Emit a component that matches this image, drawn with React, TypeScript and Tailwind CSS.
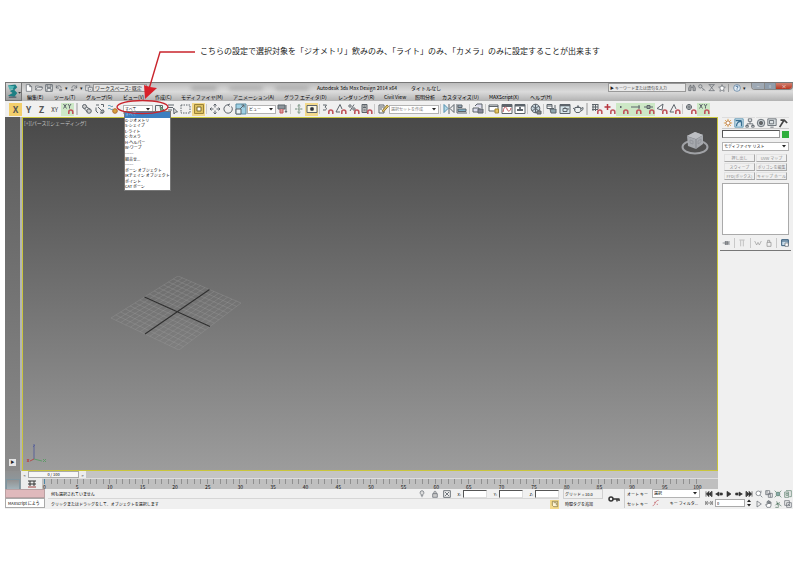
import type { ReactNode } from 'react';

const INK = '#5d646b';
const BLUE = '#4f8fae';
const RED = '#c0545c';

const magnet = (
  <path d="M6.8 11V9a2 2 0 0 1 4 0v2" stroke={RED} strokeWidth="1.6" />
);

const drawings: Record<string, ReactNode> = {
  xyMagnet: (
    <>
      <path d="M1.5 1l3 4.500M4.500 1l-3 4.500M6 1l1.500 2.200L9 1M7.500 3.200v2.300" />
      {magnet}
    </>
  ),
  link: (
    <>
      <circle cx="3.500" cy="3.500" r="2" fill="#ccc" />
      <circle cx="8" cy="8" r="2.300" fill="#ccc" />
      <path d="M3 5.500l3.500 3.500M5.500 3.500L9 6.500" />
    </>
  ),
  unlink: (
    <>
      <path d="M2 2h3M7 1.500h2.500V4M2 4.500V8l2 2M6 10h3V6.500M4 4l4 4" />
      <circle cx="8.500" cy="8.500" r="1.500" />
    </>
  ),
  bind: (
    <>
      <path d="M1 3c2-2 3 2 5 0M1 6c2-2 3 2 5 0" stroke={BLUE} />
      <circle cx="8" cy="8" r="2.300" fill="#d9a23c" stroke="#b06a30" />
    </>
  ),
  select: (
    <>
      <path d="M1.500 2.500h7v7h-7z" />
      <path d="M6 3l4 4-2 .3L7 9z" fill="#7ea58a" stroke="#5c8068" />
    </>
  ),
  list: (
    <>
      <path d="M1 2h6M1 4.500h5M1 7h4" />
      <path d="M6.500 5l4 4H8.500l-1.500 2z" fill="#eee" />
    </>
  ),
  rect: <path d="M1 2h9v8H1z" strokeDasharray="1.500 1" />,
  crossing: (
    <>
      <path d="M1.500 1.500h9v9h-9z" fill="#dcc060" stroke="#9a8238" />
      <path d="M4 4h4v4H4z" fill="#fff" stroke="#7a6a30" />
    </>
  ),
  move: (
    <path d="M6 1v3.500M6 7.500V11M1 6h3.500M7.500 6H11M4.500 2.500L6 1l1.500 1.500M4.500 9.500L6 11l1.500-1.500M2.500 4.500L1 6l1.500 1.500M9.500 4.500L11 6 9.500 7.500" />
  ),
  rotate: <path d="M9.500 3.500A4.200 4.200 0 1 1 6 1.800l2-.8M6 1.800l1.500 1.700" />,
  scale: (
    <>
      <path d="M1 1h10v10H1z" fill="#9fd0e4" stroke="#5a8ca0" />
      <path d="M1 6h5v5H1z" fill="#eaf4f8" />
      <path d="M5 6l4-4M6.500 2H9v2.500" />
    </>
  ),
  pivot: (
    <>
      <path d="M1 2h7v4H1z" fill="#8d969c" />
      <path d="M3 6v4h3V6" stroke={RED} fill="#dc9a9a" />
      <path d="M9 2v7M8 8l1 1.500L10 8" />
    </>
  ),
  manipulate: (
    <path d="M6 1v10M2 6h8M4.500 3h3M4.500 9h3" stroke="#6f8a78" strokeDasharray="2 .6" />
  ),
  keyboard: (
    <>
      <path d="M1 2.500h10v7H1z" fill="#fdf6df" />
      <circle cx="6" cy="6" r="1.700" fill="#333" />
    </>
  ),
  snap3: (
    <>
      <path d="M1 2h3.500L3 4.200c2 .2 2 3.300-.8 2.800H1" />
      {magnet}
    </>
  ),
  snapAngle: (
    <>
      <path d="M1 9L5 1.500 7 6M1 9h4" />
      {magnet}
    </>
  ),
  snapPercent: (
    <>
      <circle cx="2" cy="3" r="1.200" />
      <circle cx="6" cy="6" r="1.200" />
      <path d="M6 1.500L2 8" />
      {magnet}
    </>
  ),
  snapSpinner: (
    <>
      <path d="M1 1.500h5v8H1zM2 4.500h3M2.500 3h2M2.500 7h2" fill="#bbb" />
      {magnet}
    </>
  ),
  edit: (
    <>
      <path d="M2 2h5v8H2zM3 4h3M3 6h2" />
      <path d="M5 8l5-6 1.500 1.300-5 5.500z" fill="#e2c66c" stroke="#957d3a" />
    </>
  ),
  mirror: (
    <>
      <path d="M1 1.500v8l4-4z" fill="#b8d9e6" stroke={BLUE} />
      <path d="M11 1.500v8l-4-4zM6 1v10" />
    </>
  ),
  align: (
    <>
      <path d="M1 1v9h10" />
      <path d="M2 2h4v2.500H2z" fill="#9ab" />
      <path d="M2 6h8v2.500H2z" fill="#7fb3cb" />
    </>
  ),
  layers: (
    <>
      <path d="M3 3l2-2h5v4M1 5h6v4H1z" fill="#dde" />
      <path d="M6 6h5v4H6z" fill="#889" />
    </>
  ),
  ribbon: (
    <>
      <path d="M1 2h9v6H1zM1 3.500h9" fill="#fff" />
      <path d="M7 6h3.500v4H7z" fill="#e4c461" stroke="#a58a35" />
    </>
  ),
  curve: (
    <>
      <path d="M1 1.500h10v9H1z" fill="#fff" />
      <path d="M1 3h10" strokeWidth="2" />
      <path d="M2 9c1-6 3-6 4-3s3 3 4-1" stroke={RED} />
    </>
  ),
  schematic: (
    <>
      <path d="M1 1.500h10v9H1z" fill="#fff" />
      <path d="M1 2.500h10M6 4v3M3 7h6" strokeWidth="1.800" />
    </>
  ),
  material: (
    <>
      <circle cx="5.500" cy="5.500" r="4.300" fill="#c5d4dc" />
      <path d="M2 3l7 5M2 8l7-5M5.500 1v9" />
      <path d="M7 8h4v3H7z" fill="#888" />
    </>
  ),
  renderSetup: (
    <>
      <path d="M1 1.500h5v4H1zM1 3h5" fill="#fff" />
      <path d="M4 6h6v4H5zM6 5.500h2" fill="#8fa5ae" />
      <path d="M9 2v3" />
    </>
  ),
  frame: (
    <>
      <path d="M1 1.500h10v9H1z" fill="#d6e4ea" />
      <path d="M1 2.500h10" strokeWidth="1.600" />
      <path d="M4 5.500h4v3H4zM8 6h2M5 5h2" />
    </>
  ),
  teapot: (
    <path d="M3 4.500h5.500l.5 3-1.500 2h-3.500l-1.500-2zM3.500 7L1 5M9 5.500l2-1v2L9 8M5 4l1-1.500L7 4" fill="#edf1f2" />
  ),
  snapGrid: (
    <>
      <path d="M1 1.500h6M1 4h6M1 6.500h6M2 1v7M4.500 1v7M7 1v5" />
      {magnet}
    </>
  ),
  snapPivot: (
    <>
      <path d="M3.500 1v6M.5 4h6" stroke="#b7353f" strokeWidth="1.500" />
      {magnet}
    </>
  ),
  snapVertex: (
    <>
      <path d="M3 4h1.500" strokeWidth="2" />
      {magnet}
    </>
  ),
  snapEdge: (
    <>
      <path d="M1 4h9M9 2v4" />
      {magnet}
    </>
  ),
  snapMid: (
    <>
      <path d="M1 4h9M4 2.500h3v3H4z" />
      {magnet}
    </>
  ),
  snapFace: (
    <>
      <path d="M7 1L1 5.500 6 7z" fill="#fff" />
      {magnet}
    </>
  ),
  snapFrozen: (
    <>
      <circle cx="4" cy="4" r="2.500" />
      <path d="M1 4h6M4 1v6" />
      {magnet}
    </>
  ),
  newFile: <path d="M2 1h5l3 3v7H2zM7 1v3h3" fill="#fff" />,
  open: <path d="M1 9V3h4l1 1h4v1.500M1 9l2.500-4H12L9.500 9z" fill="#e8e8e8" />,
  save: <path d="M1 1h10v10H1zM3 1v4h6V1M3 11V7h6v4" fill="#fff" strokeWidth="1.300" />,
  undo: <path d="M2 6c1-5 8-4 7 0M2 2v4h4M7 8h3v2H7z" />,
  redo: <path d="M10 6C9 1 2 2 3 6M10 2v4H6M2 8h3v2H2z" />,
  project: <path d="M1 2h6v3M1 2v8h3M5 5h6v6H5zM7 8h2" fill="#eee" />,
  binoculars: (
    <path d="M2 4l1-2h1.500v8H1V6zM10 4L9 2H7.500v8H11V6zM4.500 5h3" fill="#aaa" />
  ),
  key: (
    <>
      <circle cx="3.500" cy="3.500" r="2.500" />
      <path d="M5.500 5.500L11 10M8 8l-1 2" />
    </>
  ),
  exchange: <path d="M2 1l7 9M9 1L2 10M1 1h9M1 10h9" />,
  star: <path d="M6 1l1.500 3.500 3.500.3-2.700 2.400.8 3.800L6 9l-3.100 2 .8-3.800L1 4.800l3.500-.3z" fill="#fff" />,
  help: (
    <>
      <circle cx="6" cy="6" r="5" fill="#e4edf5" stroke="#4b7397" />
      <path d="M4.500 4.500c0-2 3-2 3 0C7.500 6 6 5.500 6 7M6 8.200v1" stroke="#2e5a85" strokeWidth="1.300" />
    </>
  ),
  create: (
    <>
      <path d="M6 1v10M1 6h10M2.500 2.500l7 7M9.500 2.500l-7 7" stroke="#e09a3d" />
      <circle cx="6" cy="6" r="2.500" fill="#fff" stroke="#b5733a" />
    </>
  ),
  modify: (
    <>
      <path d="M1 1h10v10H1z" fill="#cfe3ee" stroke={BLUE} />
      <path d="M2 3h7M3 10c0-4 2-6 6-6M9 4v6" stroke="#386f91" strokeWidth="1.500" />
    </>
  ),
  hierarchy: <path d="M4 1h4v3H4zM6 4v3M2.500 10V7h7v3M1 9h3v2H1zM8 9h3v2H8z" />,
  motion: (
    <>
      <circle cx="6" cy="6" r="4.500" fill="#c8cdd0" />
      <circle cx="6" cy="6" r="2" fill="#666" />
    </>
  ),
  display: <path d="M1 1h10v8H1zM3 3h5v4H3zM4 11h4" fill="#dde2e4" />,
  utilities: <path d="M3 2.500h4.500L11 6M7 3L2 11" stroke="#444" strokeWidth="2" />,
  pin: <path d="M1 6h4M5 3v6M5 4h4v4H5M10.500 3v6" fill="#999" />,
  endResult: <path d="M2 1.500h8M4 2v9M8 2v9" stroke="#aaa" />,
  unique: <path d="M1 3l3 6 2-4 2 4 3-6" stroke="#999" />,
  trash: <path d="M3 5h6v6H3zM4 5V2h3v3" stroke="#888" />,
  configure: (
    <>
      <path d="M1 1h10v9H1zM1 3h10" fill="#c8dcea" stroke="#385d7b" strokeWidth="1.500" />
      <path d="M6 6h5v5H6z" fill="#fff" />
    </>
  ),
  bulb: <path d="M6 1a3 3 0 0 1 1.500 5.500V8h-3V6.500A3 3 0 0 1 6 1M5 10h2" fill="#ddd" />,
  lock: <path d="M2.500 5.500h7V11h-7zM4 5.500c0-5 4-5 4 0" fill="#ccc" />,
  transform: <path d="M1 1h10v10H1zM3 3l6 6M9 3L3 9" strokeWidth="1.300" />,
  bigKey: (
    <>
      <circle cx="3" cy="6" r="2" stroke="#333" strokeWidth="1.500" />
      <path d="M5 6h6.500M9 6v2.500M11 6v2" stroke="#333" strokeWidth="1.500" />
    </>
  ),
  tag: <path d="M2 2h8v8H4L2 8zM4 4h4v4" fill="#fff6d8" stroke="#7a6a30" />,
  tangent: <path d="M1 10C5 10 4 2 10 2M3 5h2M7 8h2" stroke={RED} />,
  first: <path d="M1.500 2v8M10.500 2v8M6 2v8L2 6zM10 2v8L6 6z" fill="#333" stroke="#333" />,
  prev: <path d="M6 3v6L1 6zM7.500 4.500h3.500v3H7.500z" fill="#333" stroke="#333" />,
  play: <path d="M3 2v8l6-4z" fill="#333" stroke="#333" />,
  next: <path d="M6 3v6l5-3zM1 4.500h3.500v3H1z" fill="#333" stroke="#333" />,
  last: <path d="M1.500 2v8M10.500 2v8M2 2v8l4-4zM6 2v8l4-4z" fill="#333" stroke="#333" />,
  keyMode: <path d="M1 3v6M4 3L2 6l2 3M8 3l2 3-2 3M11 3v6M3 6h6" stroke="#555" />,
  zoom: (
    <>
      <circle cx="5" cy="5" r="3.500" fill="#fff" />
      <path d="M8 8l3 3M9 1v3" />
    </>
  ),
  zoomAll: <path d="M1 1h6v6H1zM5 5h6v6H5zM3 1v6M8 5v6" />,
  extents: <path d="M3.500 3.500h5v5h-5zM1 1l2 2M11 1L9 3M1 11l2-2M11 11L9 9" fill="#8aa" stroke="#557a66" />,
  extentsAll: <path d="M1 3h6v8H1zM3 1h8v9H8M3 5h3v3H3z" stroke="#557a66" />,
  fov: <path d="M3 1.500v9L9.500 6z" fill="#eee" />,
  pan: <path d="M3 11L1 7l2 .5V2.500h1.500V6 1H6v5-4h1.500v4-3H9v5l-1 3z" fill="#fff" />,
  orbit: <path d="M4 2l3 8M2 8c3-5 7 0 9 1M4 6l5-2M2 11h5" stroke="#446a55" />,
  maximize: <path d="M1 1h7v7H1zM4 4h7v7H4zM6 6l3 3" />,
};

const iconSizes = {
  sm: 'size-[8px] shrink-0',
  md: 'size-[10px] shrink-0',
  lg: 'size-[12px] shrink-0',
};

type IconProps = { name: string; size?: keyof typeof iconSizes };

function Icon({ name, size = 'lg' }: IconProps) {
  return (
    <svg
      viewBox="0 0 12 12"
      className={iconSizes[size]}
      fill="none"
      stroke={INK}
      strokeWidth="1"
      aria-hidden="true"
    >
      {drawings[name]}
    </svg>
  );
}

function Tool({ name, tone = '' }: { name: string; tone?: string }) {
  return (
    <button
      aria-label={name}
      className={`flex h-[13px] w-[13px] shrink-0 items-center justify-center ${tone}`}
    >
      <Icon name={name} />
    </button>
  );
}

function Tools({ names }: { names: string[] }) {
  return names.map((name) => <Tool key={name} name={name} />);
}

function Divider() {
  return <span className="mx-px h-[10px] w-px shrink-0 bg-[#c9c9c9]" />;
}

function Handle() {
  return (
    <span className="mx-[2px] h-[12px] w-[2px] shrink-0 border-x border-[#c4c4c4]" />
  );
}

type DropProps = { label: string; options: string[]; width: string };

function Drop({ label, options, width }: DropProps) {
  return (
    <span className={`relative flex h-[9px] shrink-0 items-center border border-[#b3b3b3] bg-white ${width}`}>
      <select
        aria-label={label}
        className="h-full w-full appearance-none pl-px text-[4px] leading-[7px] outline-none"
      >
        {options.map((option) => (
          <option key={option}>{option}</option>
        ))}
      </select>
      <svg viewBox="0 0 4 3" className="pointer-events-none absolute right-[2px] h-[3px] w-[4px]" aria-hidden="true">
        <path d="M0 0h4L2 2.500z" fill="#222" />
      </svg>
    </span>
  );
}

const menus = [
  { label: '編集(E)', width: 'w-[27px]' },
  { label: 'ツール(T)', width: 'w-[32px]' },
  { label: 'グループ(G)', width: 'w-[37px]' },
  { label: 'ビュー(V)', width: 'w-[32px]' },
  { label: '作成(C)', width: 'w-[26px]' },
  { label: 'モディファイヤ(M)', width: 'w-[52px]' },
  { label: 'アニメーション(A)', width: 'w-[51px]' },
  { label: 'グラフ エディタ(D)', width: 'w-[54px]' },
  { label: 'レンダリング(R)', width: 'w-[46px]' },
  { label: 'Civil View', width: 'w-[31px]' },
  { label: '照明分析', width: 'w-[27px]' },
  { label: 'カスタマイズ(U)', width: 'w-[47px]' },
  { label: 'MAXScript(X)', width: 'w-[41px]' },
  { label: 'ヘルプ(H)', width: 'w-[26px]' },
];

const filters = [
  'すべて',
  'G-ジオメトリ',
  'S-シェイプ',
  'L-ライト',
  'C-カメラ',
  'H-ヘルパー',
  'W-ワープ',
  '------',
  '組合せ...',
  '------',
  'ボーン オブジェクト',
  'IKチェイン オブジェクト',
  'ポイント',
  'CAT ボーン',
];

const modifiers = ['押し出し', 'UVW マップ', 'スウィープ', 'ポリゴンを編集', 'FFD(ボックス)', 'キャップ ホール'];

const tabs = ['create', 'modify', 'hierarchy', 'motion', 'display', 'utilities'];

function TitleBar() {
  return (
    <div className="flex h-[10px] items-center border-t border-[#777] bg-linear-to-b from-[#bcbcbc] to-[#dcdcdc]">
      <div className="flex items-center gap-[2px] pl-[3px]">
        <Icon name="newFile" size="sm" />
        <Icon name="open" size="sm" />
        <Icon name="save" size="sm" />
        <Icon name="undo" size="sm" />
        <span className="text-[5px] leading-[8px]">▾</span>
        <Icon name="redo" size="sm" />
        <span className="text-[5px] leading-[8px]">▾</span>
        <Icon name="project" size="sm" />
      </div>
      <button className="h-[8px] w-[54px] overflow-hidden border border-[#999] bg-[#e4e4e4] px-px text-left text-[5px] leading-[6px] whitespace-nowrap">
        ワークスペース: 既定
      </button>
      <div className="flex flex-1 justify-end gap-3 pr-[8px]">
        <span className="h-[4px] w-[26px] rounded-full bg-[#a5a5a5] blur-[2px]" />
        <span className="h-[4px] w-[34px] rounded-full bg-[#aaaaaa] blur-[2px]" />
        <span className="h-[4px] w-[34px] rounded-full bg-[#aaaaaa] blur-[2px]" />
      </div>
      <p className="flex w-[291px] gap-[14px] text-[5px] leading-[8px] whitespace-nowrap text-black">
        <span>Autodesk 3ds Max Design 2014 x64</span>
        <span>タイトルなし</span>
      </p>
      <div className="flex h-[9px] w-[78px] items-center border border-[#999] bg-[#e9e9e9]">
        <span className="w-[6px] text-center text-[4px]">▶</span>
        <input
          aria-label="検索"
          placeholder="キーワードまたは語句を入力"
          className="h-full min-w-0 flex-1 text-[4px] outline-none placeholder:text-[#444]"
        />
      </div>
      <div className="flex items-center gap-[2px] pl-[2px]">
        <Icon name="binoculars" size="sm" />
        <Icon name="key" size="sm" />
        <Icon name="exchange" size="sm" />
        <Icon name="star" size="sm" />
        <span className="h-[8px] w-[3px] border-l border-[#999]" />
        <Icon name="help" size="sm" />
        <span className="w-[8px] text-[5px]">▾</span>
      </div>
      <div className="flex h-[7px] w-[42px] self-start overflow-hidden rounded-b-sm border border-t-0 border-[#888] text-[5px] leading-[6px] text-white">
        <button aria-label="最小化" className="w-[12px] bg-[#9fa9b4]">–</button>
        <button aria-label="元に戻す" className="w-[11px] border-l border-[#888] bg-[#8f9dac]">▫</button>
        <button aria-label="閉じる" className="flex-1 border-l border-[#888] bg-linear-to-b from-[#d08070] to-[#b8321c]">×</button>
      </div>
    </div>
  );
}

function MenuBar() {
  return (
    <nav className="flex h-[9px] items-center bg-linear-to-b from-[#dadada] to-[#b2b2b2] pl-[5px] text-[5px] leading-[8px] text-black">
      {menus.map((menu) => (
        <button key={menu.label} className={`shrink-0 text-left whitespace-nowrap ${menu.width}`}>
          {menu.label}
        </button>
      ))}
    </nav>
  );
}

function MainToolbar() {
  return (
    <div className="flex h-[16px] items-center overflow-hidden bg-[#f0f0f0] pl-[4px]">
      <button className="h-[13px] w-[13px] shrink-0 bg-[#f3cf6b] text-[9px] leading-[13px] font-bold text-[#555]">X</button>
      <button className="w-[13px] shrink-0 text-[9px] leading-[13px] font-bold text-[#555]">Y</button>
      <button className="w-[13px] shrink-0 text-[9px] leading-[13px] font-bold text-[#555]">Z</button>
      <button className="w-[13px] shrink-0 text-[6px] leading-[13px] text-[#333]">XY</button>
      <Tool name="xyMagnet" tone="bg-[#cde8c6]" />
      <Handle />
      <Tools names={['link', 'unlink', 'bind']} />
      <span className="w-[4px] shrink-0" />
      <Drop label="選択フィルタ" options={['すべて']} width="w-[30px]" />
      <Tools names={['select', 'list', 'rect']} />
      <Tool name="crossing" tone="bg-[#f3d98a]" />
      <Divider />
      <Tools names={['move', 'rotate', 'scale']} />
      <Drop label="参照座標系" options={['ビュー']} width="w-[29px]" />
      <Tool name="pivot" />
      <Divider />
      <Tool name="manipulate" />
      <Tool name="keyboard" tone="bg-[#f3d98a]" />
      <Divider />
      <Tools names={['snap3', 'snapAngle', 'snapPercent', 'snapSpinner']} />
      <Divider />
      <Tool name="edit" />
      <Drop label="名前付き選択セット" options={['選択セットを作成']} width="w-[50px] text-[#777]" />
      <Divider />
      <Tools names={['mirror', 'align']} />
      <Divider />
      <Tool name="layers" />
      <Divider />
      <Tools names={['ribbon', 'curve', 'schematic']} />
      <Divider />
      <Tool name="material" />
      <Divider />
      <Tools names={['renderSetup', 'frame', 'teapot']} />
      <Handle />
      <Tools names={['snapGrid', 'snapPivot']} />
      <Tool name="snapVertex" tone="bg-[#cde8c6]" />
      <Tool name="snapEdge" tone="bg-[#cde8c6]" />
      <Tool name="snapMid" tone="bg-[#cde8c6]" />
      <Tools names={['snapFace', 'snapAngle']} />
      <Divider />
      <Tool name="snapFrozen" />
      <Tool name="xyMagnet" tone="bg-[#cde8c6]" />
    </div>
  );
}

// corners of the home grid: left, top, right, bottom
const corners = [
  [0, 42],
  [67, 0],
  [130, 27],
  [68, 74],
];

function gridPoint(u: number, v: number) {
  const [l, t, r, b] = corners;
  return [0, 1]
    .map((i) => (1 - u) * (1 - v) * l[i] + u * (1 - v) * t[i] + u * v * r[i] + (1 - u) * v * b[i])
    .join(' ');
}

const STEPS = Array.from({ length: 15 }, (_, i) => i / 14);

function HomeGrid() {
  return (
    <svg viewBox="0 0 132 74" className="absolute top-[158px] left-[88px] h-[74px] w-[132px]" fill="none" aria-hidden="true">
      {STEPS.map((s) => (
        <path
          key={s}
          d={`M${gridPoint(s, 0)}L${gridPoint(s, 1)}M${gridPoint(0, s)}L${gridPoint(1, s)}`}
          stroke="#a0a0a0"
          strokeOpacity="0.5"
          strokeWidth="0.600"
        />
      ))}
      <path
        d={`M${gridPoint(0.5, 0)}L${gridPoint(0.5, 1)}M${gridPoint(0, 0.5)}L${gridPoint(1, 0.5)}`}
        stroke="#2e2e2e"
        strokeWidth="1.100"
      />
    </svg>
  );
}

function Viewport() {
  return (
    <div className="relative h-[354px] min-w-0 flex-1 border border-[#c9c53c] bg-linear-to-b from-[#494949] to-[#9c9c9c]">
      <p className="pt-px pl-px text-[5px] leading-[7px] text-[#c4c4c4]">[+][パース][シェーディング]</p>
      <HomeGrid />
      <svg viewBox="0 0 30 28" className="absolute top-[11px] right-[7px] h-[28px] w-[30px]" fill="none" aria-hidden="true">
        <ellipse cx="15" cy="18" rx="12.500" ry="6.500" stroke="#a0a2a6" strokeWidth="2" />
        <path d="M7 7l8-4 8 3v9l-7 5-8-3z" fill="#a6a9ae" />
        <path d="M7 7l9 3 7-4M16 10v10" stroke="#85888e" />
        <path d="M7 7l8-4 8 3-7 4z" fill="#bcbec2" />
        <path d="M10 11l3 1v3l-3-1zM18 12l3-2v3l-3 2z" stroke="#8c8f96" strokeWidth=".7" />
      </svg>
      <svg viewBox="0 0 22 22" className="absolute bottom-[4px] left-[3px] size-[22px]" fill="none" strokeWidth="1" aria-hidden="true">
        <path d="M8 15V4M7 1h2L7 3h2" stroke="#5a6398" />
        <path d="M8 15l8 2M17 15l3 3M20 15l-3 3" stroke="#5f9a68" />
        <path d="M8 15l-4 2M1 15l2 3M3 15l-2 3" stroke="#b34c4c" />
      </svg>
    </div>
  );
}

const ticks = Array.from({ length: 101 }, (_, i) => i);
const labels = ticks.filter((tick) => tick % 5 === 0);

function TimeLine() {
  return (
    <div className="flex h-[18px] bg-[#c4c4c4]">
      <div className="w-[16px] bg-linear-to-b from-[#909090] to-[#8b9da6] p-px pt-[2px]">
        <button aria-label="レイアウト" className="h-[14px] w-full border border-[#80959f] bg-linear-to-b from-[#929292] to-[#a8bec8]" />
      </div>
      <div className="flex min-w-0 flex-1 flex-col">
        <div className="flex h-[7px] text-[4px] leading-[6px] text-black">
          <button className="w-[7px] bg-[#ececec]">&lt;</button>
          <button className="w-[51px] border border-[#aaa] bg-[#f6f6f6] leading-[5px]">0 / 100</button>
          <button className="w-[7px] bg-[#ececec]">&gt;</button>
        </div>
        <div className="flex h-[11px]">
          <button aria-label="ミニ カーブ エディタ" className="flex w-[21px] items-center justify-center bg-[#ececec]">
            <svg viewBox="0 0 8 8" className="size-[8px]" fill="none" stroke="#333" aria-hidden="true">
              <path d="M0 1h8M2 1v5M6 1v5M0 4h8" />
              <path d="M0 7h8" stroke="#9d4040" />
            </svg>
          </button>
          <div className="min-w-0 flex-1 border-t border-[#dedede] bg-[#bfbfbf] pr-[20px] pl-[2px]">
            <div className="flex h-[5px] justify-between">
              {ticks.map((tick) => (
                <span key={tick} className={tick === 0 ? 'w-px bg-[#4f87a5]' : 'w-px bg-[#909090]'} />
              ))}
            </div>
            <div className="flex justify-between text-[5px] leading-[5px] text-[#111]">
              {labels.map((label) => (
                <span key={label} className="flex w-px justify-center">
                  <span>{label}</span>
                </span>
              ))}
            </div>
          </div>
        </div>
      </div>
    </div>
  );
}

function CommandPanel() {
  return (
    <aside className="flex w-[75px] shrink-0 flex-col bg-[#f0f0f0] px-[4px] text-[4px]">
      <div className="flex h-[12px] items-end justify-between border-b border-[#ccc]">
        {tabs.map((tab) => (
          <button key={tab} aria-label={tab} className="flex h-[11px] w-[11px] items-center justify-center border-t border-[#ddd]">
            <Icon name={tab} size="md" />
          </button>
        ))}
      </div>
      <div className="flex items-center gap-[2px] pt-px">
        <input aria-label="名前" className="h-[8px] min-w-0 flex-1 border border-[#999] border-t-[#555] border-l-[#555] bg-white" />
        <button aria-label="オブジェクト カラー" className="size-[7px] bg-[#2fae3d]" />
      </div>
      <div className="flex pt-[4px] text-black">
        <Drop label="モディファイヤ リスト" options={['モディファイヤ リスト']} width="w-full" />
      </div>
      <div className="grid grid-cols-2 gap-px px-[2px] pt-[3px]">
        {modifiers.map((modifier) => (
          <button key={modifier} className="h-[8px] border border-[#e2e2e2] border-r-[#aaa] border-b-[#aaa] leading-[6px] whitespace-nowrap text-[#888]">
            {modifier}
          </button>
        ))}
      </div>
      <div className="mt-[3px] h-[52px] border border-[#aaa] bg-white" />
      <div className="flex h-[15px] items-center justify-between">
        <Icon name="pin" size="sm" />
        <Divider />
        <Icon name="endResult" size="sm" />
        <Divider />
        <Icon name="unique" size="sm" />
        <Icon name="trash" size="sm" />
        <Divider />
        <Icon name="configure" size="sm" />
      </div>
      <div className="-mx-[2px] border-t border-[#777]" />
    </aside>
  );
}

function Coordinate({ axis }: { axis: string }) {
  return (
    <label className="flex w-[36px] items-center justify-end gap-[2px]">
      {axis}:
      <input className="h-[8px] w-[24px] border border-[#ddd] border-t-[#555] border-l-[#555] bg-white" />
    </label>
  );
}

function StatusBar() {
  return (
    <div className="flex h-[20px] bg-[#f0f0f0] text-[4px] leading-[6px] text-black">
      <div className="w-[40px] shrink-0">
        <div className="h-[9px] border border-[#b9a0a2] bg-[#dfb9bc]" />
        <div className="h-[10px] border border-[#aaa] bg-white pl-[2px] leading-[8px] whitespace-nowrap">MAXScript によう</div>
      </div>
      <div className="ml-[3px] min-w-0 flex-1">
        <div className="flex h-[10px] items-center border-b border-[#d6d6d6]">
          <p className="flex-1 pl-[3px]">何も選択されていません</p>
          <div className="flex w-[33px] justify-between">
            <Icon name="bulb" size="sm" />
            <Icon name="lock" size="sm" />
            <Icon name="transform" size="sm" />
          </div>
          <Coordinate axis="X" />
          <Coordinate axis="Y" />
          <Coordinate axis="Z" />
        </div>
        <div className="flex h-[10px] items-center">
          <p className="flex-1 pl-[3px]">クリックまたはドラッグをして、オブジェクトを選択します</p>
          <button aria-label="時間タグ" className="flex size-[9px] items-center justify-center bg-[#f3d98a]">
            <Icon name="tag" size="sm" />
          </button>
        </div>
      </div>
      <div className="ml-[4px] w-[40px] shrink-0">
        <p className="h-[10px] border border-[#d0d0d0] pl-px leading-[8px]">グリッド = 10.0</p>
        <button className="block h-[10px] pl-[2px]">時間タグを追加</button>
      </div>
      <button aria-label="キーを設定" className="flex h-[19px] w-[22px] shrink-0 items-center justify-center border-r border-[#ccc]">
        <Icon name="bigKey" />
      </button>
      <div className="grid w-[25px] shrink-0 grid-rows-2 justify-items-center">
        <button>オート キー</button>
        <button>セット キー</button>
      </div>
      <div className="flex w-[50px] shrink-0 flex-col gap-px pl-[2px]">
        <Drop label="キー セット" options={['選択']} width="w-full" />
        <div className="flex items-center justify-between pr-[2px]">
          <Icon name="tangent" size="sm" />
          <button>キー フィルタ...</button>
        </div>
      </div>
      <div className="flex w-[53px] shrink-0 flex-col pl-[3px]">
        <div className="flex h-[10px] items-center justify-between pl-[2px]">
          {['first', 'prev', 'play', 'next', 'last'].map((name) => (
            <button key={name} aria-label={name}>
              <Icon name={name} size="sm" />
            </button>
          ))}
        </div>
        <div className="flex items-center gap-[2px] pl-[2px]">
          <Icon name="keyMode" size="sm" />
          <input aria-label="フレーム" type="text" defaultValue="0" className="h-[8px] w-[30px] border border-[#aaa] bg-white pl-px" />
          <svg viewBox="0 0 4 8" className="h-[8px] w-[4px]" fill="#222" aria-hidden="true">
            <path d="M0 3h4L2 .5zM0 5h4L2 7.500z" />
          </svg>
        </div>
      </div>
      <div className="grid w-[40px] shrink-0 grid-cols-4 place-items-center pl-px">
        {['zoom', 'zoomAll', 'extents', 'extentsAll', 'fov', 'pan', 'orbit', 'maximize'].map((name) => (
          <button key={name} aria-label={name}>
            <Icon name={name} size="sm" />
          </button>
        ))}
      </div>
    </div>
  );
}

function FilterMenu() {
  return (
    <ul
      role="listbox"
      aria-label="選択フィルタ"
      className="absolute top-[111px] left-[124px] grid h-[80px] w-[47px] auto-rows-fr grid-cols-1 border border-[#777] bg-white text-[4px] leading-[5px] whitespace-nowrap text-black"
    >
      {filters.map((filter, i) => (
        <li key={i} role="option" aria-selected={i === 0} className={i === 0 ? 'bg-[#3d7fc0] text-[#a8cbe8]' : ''}>
          {filter}
        </li>
      ))}
    </ul>
  );
}

function Callout() {
  return (
    <svg viewBox="0 0 90 80" className="pointer-events-none absolute top-[40px] left-[110px] h-[80px] w-[90px]" fill="none" aria-hidden="true">
      <path d="M85 12H50L39 49" stroke="#c9252d" strokeWidth="1.400" />
      <path d="M35 59l-1-14 6 2 7 1z" fill="#d8202a" />
      <ellipse cx="32.500" cy="67" rx="25.500" ry="6.500" stroke="#c9252d" strokeWidth="1.300" />
    </svg>
  );
}

export default function App() {
  return (
    <div className="relative min-h-screen bg-white font-['Noto_Sans_CJK_JP','Noto_Sans',sans-serif] text-[#222]">
      <p className="h-[82px] pt-[45px] pl-[200px] text-[8px] leading-[12px] whitespace-nowrap">
        こちらの設定で選択対象を「ジオメトリ」飲みのみ、「ライト」のみ、「カメラ」のみに設定することが出来ます
      </p>

      <main className="mr-[7px] ml-[5px] overflow-hidden">
        <header className="flex">
          <button aria-label="アプリケーション" className="flex h-[19px] w-[17px] shrink-0 items-center justify-center border border-[#777] bg-linear-to-b from-[#d8d8d8] to-[#9b9b9b]">
            <svg viewBox="0 0 16 17" className="h-[17px] w-[15px]" fill="none" aria-hidden="true">
              <path d="M2 2l8-1 2 3-3 3 3 3-3 4-7-1 5-3-3-2 4-2z" fill="#1d7f84" />
              <path d="M2 2l7 1-2 3-3 1" fill="#56b6b4" />
              <path d="M3 14.500h8" stroke="#345" />
              <path d="M13 9h3l-1.500 2z" fill="#333" />
            </svg>
          </button>
          <div className="min-w-0 flex-1">
            <TitleBar />
            <MenuBar />
          </div>
        </header>
        <MainToolbar />
        <div className="flex">
          <div className="min-w-0 flex-1">
            <div className="flex">
              <div className="flex w-[17px] shrink-0 flex-col justify-end border-r-2 border-[#b4b4b4] bg-linear-to-b from-[#5c5c5c] to-[#8c8c8c] pb-[5px] pl-[4px]">
                <button aria-label="ビューポート レイアウト" className="size-[7px] bg-[#e6e6e6] text-[4px] leading-[7px]">▶</button>
              </div>
              <Viewport />
            </div>
            <TimeLine />
          </div>
          <CommandPanel />
        </div>
        <StatusBar />
      </main>

      <FilterMenu />
      <Callout />
    </div>
  );
}
